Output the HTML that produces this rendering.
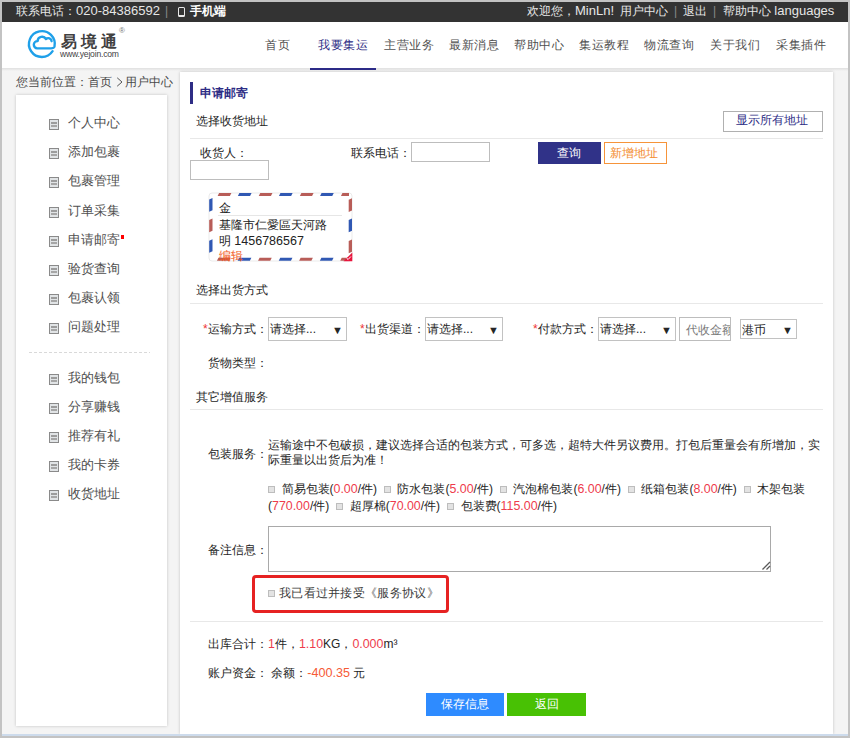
<!DOCTYPE html>
<html><head><meta charset="utf-8">
<style>
*{box-sizing:border-box}
html,body{margin:0;padding:0}
body{width:850px;height:738px;overflow:hidden;position:relative;background:#c3c3c3;font-family:"Liberation Sans",sans-serif;font-size:12px;line-height:16px;color:#262626}
.a{position:absolute;white-space:nowrap}
#frame{position:absolute;left:2px;top:2px;width:846px;height:732px;background:#f4f4f4}
#blue{position:absolute;left:2px;top:734px;width:846px;height:2px;background:#cddbec}
#top{position:absolute;left:2px;top:2px;width:846px;height:20px;background:#333}
#nav{position:absolute;left:2px;top:22px;width:846px;height:47px;background:#fff;border-bottom:1px solid #e3e3e3}
#navsh{position:absolute;left:2px;top:69px;width:846px;height:2px;background:linear-gradient(#e6e6e6,#f4f4f4)}
.tb{color:#e6e6e6;top:3px}
.sep{color:#8a8a8a}
.nv{top:37px;color:#505050;font-size:12px;letter-spacing:0.5px}
#side{position:absolute;left:16px;top:95px;width:151px;height:631px;background:#fff;box-shadow:0 0 3px rgba(0,0,0,.2)}
#main{position:absolute;left:180px;top:72px;width:653px;height:662px;background:#fff;box-shadow:0 0 3px rgba(0,0,0,.2)}
.ic{position:absolute;width:10px;height:11px;border:1px solid #8a8a8a;background:#e1e4e6}
.ic:before{content:"";position:absolute;left:1px;top:2px;width:6px;height:2px;background:#9c9c9c}
.ic:after{content:"";position:absolute;left:1px;top:5px;width:6px;height:2px;background:#a6a6a6}
.si{color:#505050;font-size:12.5px}
.ln{position:absolute;left:190px;width:633px;height:1px;background:#e8e8e8}
.inp{position:absolute;border:1px solid #bdbdbd;background:#fff}
.sel{position:absolute;border:1px solid #c2c2c2;background:#fff;color:#262626}
.sel .t{position:absolute;left:1px;top:3px}
.sel .ar{position:absolute;right:3px;top:4px;font-size:11px}
.req{color:#e33}
.red{color:#ee3b4c;font-size:12.4px}
.cbi{display:inline-block;width:7px;height:7px;border:1px solid #bdbdbd;background:#e3e3e3;margin-right:6.5px;vertical-align:0px}
.cb{position:absolute;width:7px;height:7px;border:1px solid #bdbdbd;background:#e3e3e3}
</style></head><body>
<div id="frame"></div>
<div id="top"></div>
<div class="a tb" style="left:16px">联系电话：<span style="font-size:13px">020-84386592</span></div>
<div class="a tb sep" style="left:165px">|</div>
<div class="a" style="left:178px;top:7px;width:7px;height:10px;border:1px solid #e8e8e8;border-bottom-width:2.5px;border-radius:1.5px"></div>
<div class="a tb" style="left:190px;color:#fff;font-weight:bold">手机端</div>
<div class="a tb" style="left:527px">欢迎您，<span style="font-size:13px">MinLn!</span></div>
<div class="a tb" style="left:620px">用户中心</div>
<div class="a tb sep" style="left:674px">|</div>
<div class="a tb" style="left:683px">退出</div>
<div class="a tb sep" style="left:713px">|</div>
<div class="a tb" style="left:723px">帮助中心 <span style="font-size:13px">languages</span></div>

<div id="nav"></div>
<div id="navsh"></div>
<!-- logo -->
<svg class="a" style="left:24px;top:26px" width="36" height="36" viewBox="0 0 36 36">
<path d="M28.6 25.2 A12.9 12.9 0 1 1 30.5 20.6 Q29.9 22.3 27 22.3 L13.2 22.3 A3.6 3.6 0 0 1 13.6 15.1 A4.5 4.5 0 0 1 22 13.1 A3.3 3.3 0 0 1 27.6 15.2" fill="none" stroke="#1fa0e9" stroke-width="2.35" stroke-linecap="round" stroke-linejoin="round"/>
</svg>
<div class="a" style="left:60.5px;top:31.5px;font-size:16px;line-height:20px;letter-spacing:4px;color:#404040;font-weight:bold">易境通</div>
<div class="a" style="left:119px;top:27px;font-size:8px;line-height:8px;color:#777">®</div>
<div class="a" style="left:60px;top:49px;font-size:8.6px;line-height:10px;color:#444;letter-spacing:-0.2px">www.yejoin.com</div>

<div class="a nv" style="left:265px">首页</div>
<div class="a nv" style="left:318px;color:#2e2d85">我要集运</div>
<div class="a nv" style="left:384px">主营业务</div>
<div class="a nv" style="left:449px">最新消息</div>
<div class="a nv" style="left:514px">帮助中心</div>
<div class="a nv" style="left:579px">集运教程</div>
<div class="a nv" style="left:644px">物流查询</div>
<div class="a nv" style="left:710px">关于我们</div>
<div class="a nv" style="left:776px">采集插件</div>
<div class="a" style="left:310px;top:68px;width:66px;height:2.2px;background:#2c2b88"></div>

<div class="a" style="left:16px;top:74px;color:#4a4a4a">您当前位置：首页</div>
<svg class="a" style="left:116px;top:77px" width="8" height="10" viewBox="0 0 8 10"><path d="M1.2 0.8 L6 5 L1.2 9.2" fill="none" stroke="#555" stroke-width="1"/></svg>
<div class="a" style="left:125px;top:74px;color:#4a4a4a">用户中心</div>

<div id="side"></div>
<div id="main"></div>
<div class="ic" style="left:49px;top:119.0px"></div><div class="a si" style="left:68px;top:115.0px">个人中心</div>
<div class="ic" style="left:49px;top:148.2px"></div><div class="a si" style="left:68px;top:144.2px">添加包裹</div>
<div class="ic" style="left:49px;top:177.4px"></div><div class="a si" style="left:68px;top:173.4px">包裹管理</div>
<div class="ic" style="left:49px;top:206.6px"></div><div class="a si" style="left:68px;top:202.6px">订单采集</div>
<div class="ic" style="left:49px;top:235.8px"></div><div class="a si" style="left:68px;top:231.8px">申请邮寄</div>
<div class="ic" style="left:49px;top:265.0px"></div><div class="a si" style="left:68px;top:261.0px">验货查询</div>
<div class="ic" style="left:49px;top:294.2px"></div><div class="a si" style="left:68px;top:290.2px">包裹认领</div>
<div class="ic" style="left:49px;top:323.4px"></div><div class="a si" style="left:68px;top:319.4px">问题处理</div>
<div class="a" style="left:29px;top:352px;width:121px;height:1px;background:repeating-linear-gradient(90deg,#d9d9d9 0 3px,transparent 3px 5px)"></div>
<div class="ic" style="left:49px;top:373.5px"></div><div class="a si" style="left:68px;top:369.5px">我的钱包</div>
<div class="ic" style="left:49px;top:402.7px"></div><div class="a si" style="left:68px;top:398.7px">分享赚钱</div>
<div class="ic" style="left:49px;top:431.9px"></div><div class="a si" style="left:68px;top:427.9px">推荐有礼</div>
<div class="ic" style="left:49px;top:461.1px"></div><div class="a si" style="left:68px;top:457.1px">我的卡券</div>
<div class="ic" style="left:49px;top:490.3px"></div><div class="a si" style="left:68px;top:486.3px">收货地址</div>

<div class="a" style="left:190px;top:82px;width:3px;height:22px;background:#2e2d85"></div>
<div class="a" style="left:200px;top:85px;color:#2e2d85;font-weight:bold">申请邮寄</div>
<div class="a" style="left:196px;top:113px">选择收货地址</div>
<div class="a" style="left:723px;top:111px;width:100px;height:21px;border:1px solid #b0b0b0"></div>
<div class="a" style="left:736px;top:112px;color:#2e2d85">显示所有地址</div>
<div class="ln" style="top:138px"></div>
<div class="a" style="left:200px;top:145px">收货人：</div>
<div class="inp" style="left:190px;top:160px;width:79px;height:20px"></div>
<div class="a" style="left:351px;top:145px">联系电话：</div>
<div class="inp" style="left:411px;top:142px;width:79px;height:20px"></div>
<div class="a" style="left:538px;top:142px;width:63px;height:22px;background:#303288"></div>
<div class="a" style="left:557px;top:145px;color:#fff">查询</div>
<div class="a" style="left:604px;top:142px;width:63px;height:22px;border:1px solid #f6943a;background:#fff"></div>
<div class="a" style="left:610px;top:145px;color:#f38c2f">新增地址</div>

<div class="a" style="left:121px;top:235px;width:3px;height:4px;background:#f00"></div>
<!-- envelope -->
<svg class="a" style="left:208px;top:192px" width="146" height="72" viewBox="208 192 146 72">
<defs><clipPath id="ect"><rect x="212.5" y="192" width="136.5" height="70"/></clipPath><clipPath id="ecs"><rect x="208" y="196.5" width="146" height="61"/></clipPath></defs>
<rect x="209" y="193" width="143" height="68" rx="3" fill="#fff" stroke="#e6e6e6" stroke-width="0.8"/>
<g clip-path="url(#ect)">
<polygon fill="#b85d58" points="178.05,193.00 190.25,193.00 188.75,196.00 176.55,196.00"/>
<polygon fill="#3058b3" points="198.25,193.00 210.45,193.00 208.95,196.00 196.75,196.00"/>
<polygon fill="#b85d58" points="177.35,257.70 189.55,257.70 188.05,260.80 175.85,260.80"/>
<polygon fill="#3058b3" points="198.05,257.70 210.25,257.70 208.75,260.80 196.55,260.80"/>
<polygon fill="#b85d58" points="219.15,193.00 231.35,193.00 229.85,196.00 217.65,196.00"/>
<polygon fill="#3058b3" points="239.35,193.00 251.55,193.00 250.05,196.00 237.85,196.00"/>
<polygon fill="#b85d58" points="218.45,257.70 230.65,257.70 229.15,260.80 216.95,260.80"/>
<polygon fill="#3058b3" points="239.15,257.70 251.35,257.70 249.85,260.80 237.65,260.80"/>
<polygon fill="#b85d58" points="260.25,193.00 272.45,193.00 270.95,196.00 258.75,196.00"/>
<polygon fill="#3058b3" points="280.45,193.00 292.65,193.00 291.15,196.00 278.95,196.00"/>
<polygon fill="#b85d58" points="259.55,257.70 271.75,257.70 270.25,260.80 258.05,260.80"/>
<polygon fill="#3058b3" points="280.25,257.70 292.45,257.70 290.95,260.80 278.75,260.80"/>
<polygon fill="#b85d58" points="301.35,193.00 313.55,193.00 312.05,196.00 299.85,196.00"/>
<polygon fill="#3058b3" points="321.55,193.00 333.75,193.00 332.25,196.00 320.05,196.00"/>
<polygon fill="#b85d58" points="300.65,257.70 312.85,257.70 311.35,260.80 299.15,260.80"/>
<polygon fill="#3058b3" points="321.35,257.70 333.55,257.70 332.05,260.80 319.85,260.80"/>
<polygon fill="#b85d58" points="342.45,193.00 354.65,193.00 353.15,196.00 340.95,196.00"/>
<polygon fill="#3058b3" points="362.65,193.00 374.85,193.00 373.35,196.00 361.15,196.00"/>
<polygon fill="#b85d58" points="341.75,257.70 353.95,257.70 352.45,260.80 340.25,260.80"/>
<polygon fill="#3058b3" points="362.45,257.70 374.65,257.70 373.15,260.80 360.95,260.80"/>
<polygon fill="#b85d58" points="383.55,193.00 395.75,193.00 394.25,196.00 382.05,196.00"/>
<polygon fill="#3058b3" points="403.75,193.00 415.95,193.00 414.45,196.00 402.25,196.00"/>
<polygon fill="#b85d58" points="382.85,257.70 395.05,257.70 393.55,260.80 381.35,260.80"/>
<polygon fill="#3058b3" points="403.55,257.70 415.75,257.70 414.25,260.80 402.05,260.80"/>
</g><g clip-path="url(#ecs)">
<polygon fill="#3058b3" points="209.20,158.45 212.50,156.95 212.50,169.15 209.20,170.65"/>
<polygon fill="#b85d58" points="209.20,178.95 212.50,177.45 212.50,189.65 209.20,191.15"/>
<polygon fill="#b85d58" points="348.70,158.75 352.00,157.25 352.00,169.45 348.70,170.95"/>
<polygon fill="#3058b3" points="348.70,178.85 352.00,177.35 352.00,189.55 348.70,191.05"/>
<polygon fill="#3058b3" points="209.20,199.55 212.50,198.05 212.50,210.25 209.20,211.75"/>
<polygon fill="#b85d58" points="209.20,220.05 212.50,218.55 212.50,230.75 209.20,232.25"/>
<polygon fill="#b85d58" points="348.70,199.85 352.00,198.35 352.00,210.55 348.70,212.05"/>
<polygon fill="#3058b3" points="348.70,219.95 352.00,218.45 352.00,230.65 348.70,232.15"/>
<polygon fill="#3058b3" points="209.20,240.65 212.50,239.15 212.50,251.35 209.20,252.85"/>
<polygon fill="#b85d58" points="209.20,261.15 212.50,259.65 212.50,271.85 209.20,273.35"/>
<polygon fill="#b85d58" points="348.70,240.95 352.00,239.45 352.00,251.65 348.70,253.15"/>
<polygon fill="#3058b3" points="348.70,261.05 352.00,259.55 352.00,271.75 348.70,273.25"/>
<polygon fill="#3058b3" points="209.20,281.75 212.50,280.25 212.50,292.45 209.20,293.95"/>
<polygon fill="#b85d58" points="209.20,302.25 212.50,300.75 212.50,312.95 209.20,314.45"/>
<polygon fill="#b85d58" points="348.70,282.05 352.00,280.55 352.00,292.75 348.70,294.25"/>
<polygon fill="#3058b3" points="348.70,302.15 352.00,300.65 352.00,312.85 348.70,314.35"/>
</g>
<path d="M352.3 252.5 V261.3 H343.5 Z" fill="#e8143c"/><path d="M346.5 258 l1.6 1.5 l2.8 -3" fill="none" stroke="#fff" stroke-width="1"/>
</svg>
<div class="a" style="left:219px;top:200px;color:#222">金</div>
<div class="a" style="left:218px;top:215px;width:124px;height:1px;background:#e6e6e6"></div>
<div class="a" style="left:219px;top:217px;color:#222">基隆市仁愛區天河路</div>
<div class="a" style="left:219px;top:233px;color:#222">明 <span style="font-size:12.5px">1456786567</span></div>
<div class="a" style="left:219px;top:248px;color:#f25a22">编辑</div>

<div class="a" style="left:196px;top:282px">选择出货方式</div>
<div class="ln" style="top:303px"></div>
<div class="a" style="left:203px;top:321px"><span class="req">*</span>运输方式：</div>
<div class="sel" style="left:268px;top:317px;width:79px;height:24px"><span class="t">请选择...</span><span class="ar">▼</span></div>
<div class="a" style="left:360px;top:321px"><span class="req">*</span>出货渠道：</div>
<div class="sel" style="left:425px;top:317px;width:78px;height:24px"><span class="t">请选择...</span><span class="ar">▼</span></div>
<div class="a" style="left:533px;top:321px"><span class="req">*</span>付款方式：</div>
<div class="sel" style="left:598px;top:317px;width:78px;height:24px"><span class="t">请选择...</span><span class="ar">▼</span></div>
<div class="inp" style="left:679px;top:317px;width:52px;height:24px;overflow:hidden"><span class="a" style="left:6px;top:4px;color:#7a7a7a">代收金额</span></div>
<div class="sel" style="left:740px;top:319px;width:57px;height:20px"><span class="t" style="top:2px">港币</span><span class="ar" style="top:2px">▼</span></div>
<div class="a" style="left:208px;top:355px">货物类型：</div>
<div class="a" style="left:196px;top:389px">其它增值服务</div>
<div class="ln" style="top:409px"></div>

<div class="a" style="left:208px;top:446px">包装服务：</div>
<div class="a" style="left:268px;top:437.5px;line-height:15.5px">运输途中不包破损，建议选择合适的包装方式，可多选，超特大件另议费用。打包后重量会有所增加，实<br>际重量以出货后为准！</div>
<div class="a" style="left:268px;top:481px;line-height:17px;width:560px;white-space:normal" id="pk"><span class="cbi" style="margin-left:0px"></span>简易包装(<span class="red">0.00</span>/件)<span class="cbi" style="margin-left:7px"></span>防水包装(<span class="red">5.00</span>/件)<span class="cbi" style="margin-left:7px"></span>汽泡棉包装(<span class="red">6.00</span>/件)<span class="cbi" style="margin-left:7px"></span>纸箱包装(<span class="red">8.00</span>/件)<span class="cbi" style="margin-left:7px"></span>木架包装(<span class="red">770.00</span>/件)<span class="cbi" style="margin-left:7px"></span>超厚棉(<span class="red">70.00</span>/件)<span class="cbi" style="margin-left:7px"></span>包装费(<span class="red">115.00</span>/件)</div>

<div class="a" style="left:208px;top:542px">备注信息：</div>
<div class="inp" style="left:268px;top:526px;width:503px;height:46px;border-color:#a9a9a9"></div>
<svg class="a" style="left:760px;top:560px" width="12" height="12" viewBox="760 560 12 12"><path d="M762.5 569.5 L770 562 M766.5 569.5 L770 566" stroke="#5a5a5a" stroke-width="1.3"/></svg>
<div class="a" style="left:252px;top:575px;width:197px;height:38px;border:3px solid #e62222;border-radius:4px"></div>
<div class="cb" style="left:268px;top:590px"></div>
<div class="a" style="left:279px;top:585px;color:#3a3a3a;letter-spacing:0.3px">我已看过并接受《服务协议》</div>
<div class="ln" style="top:621px"></div>
<div class="a" style="left:208px;top:636px">出库合计：<span class="red">1</span>件，<span class="red">1.10</span>KG，<span class="red">0.000</span>m³</div>
<div class="a" style="left:208px;top:665px">账户资金： 余额：<span style="color:#f65a36;font-size:12.6px">-400.35</span> 元</div>
<div class="a" style="left:426px;top:693px;width:78px;height:23px;background:#2e8bff"></div>
<div class="a" style="left:441px;top:696px;color:#fff">保存信息</div>
<div class="a" style="left:507px;top:693px;width:79px;height:23px;background:#48c104"></div>
<div class="a" style="left:535px;top:696px;color:#fff">返回</div>

<div id="blue"></div>
</body></html>
